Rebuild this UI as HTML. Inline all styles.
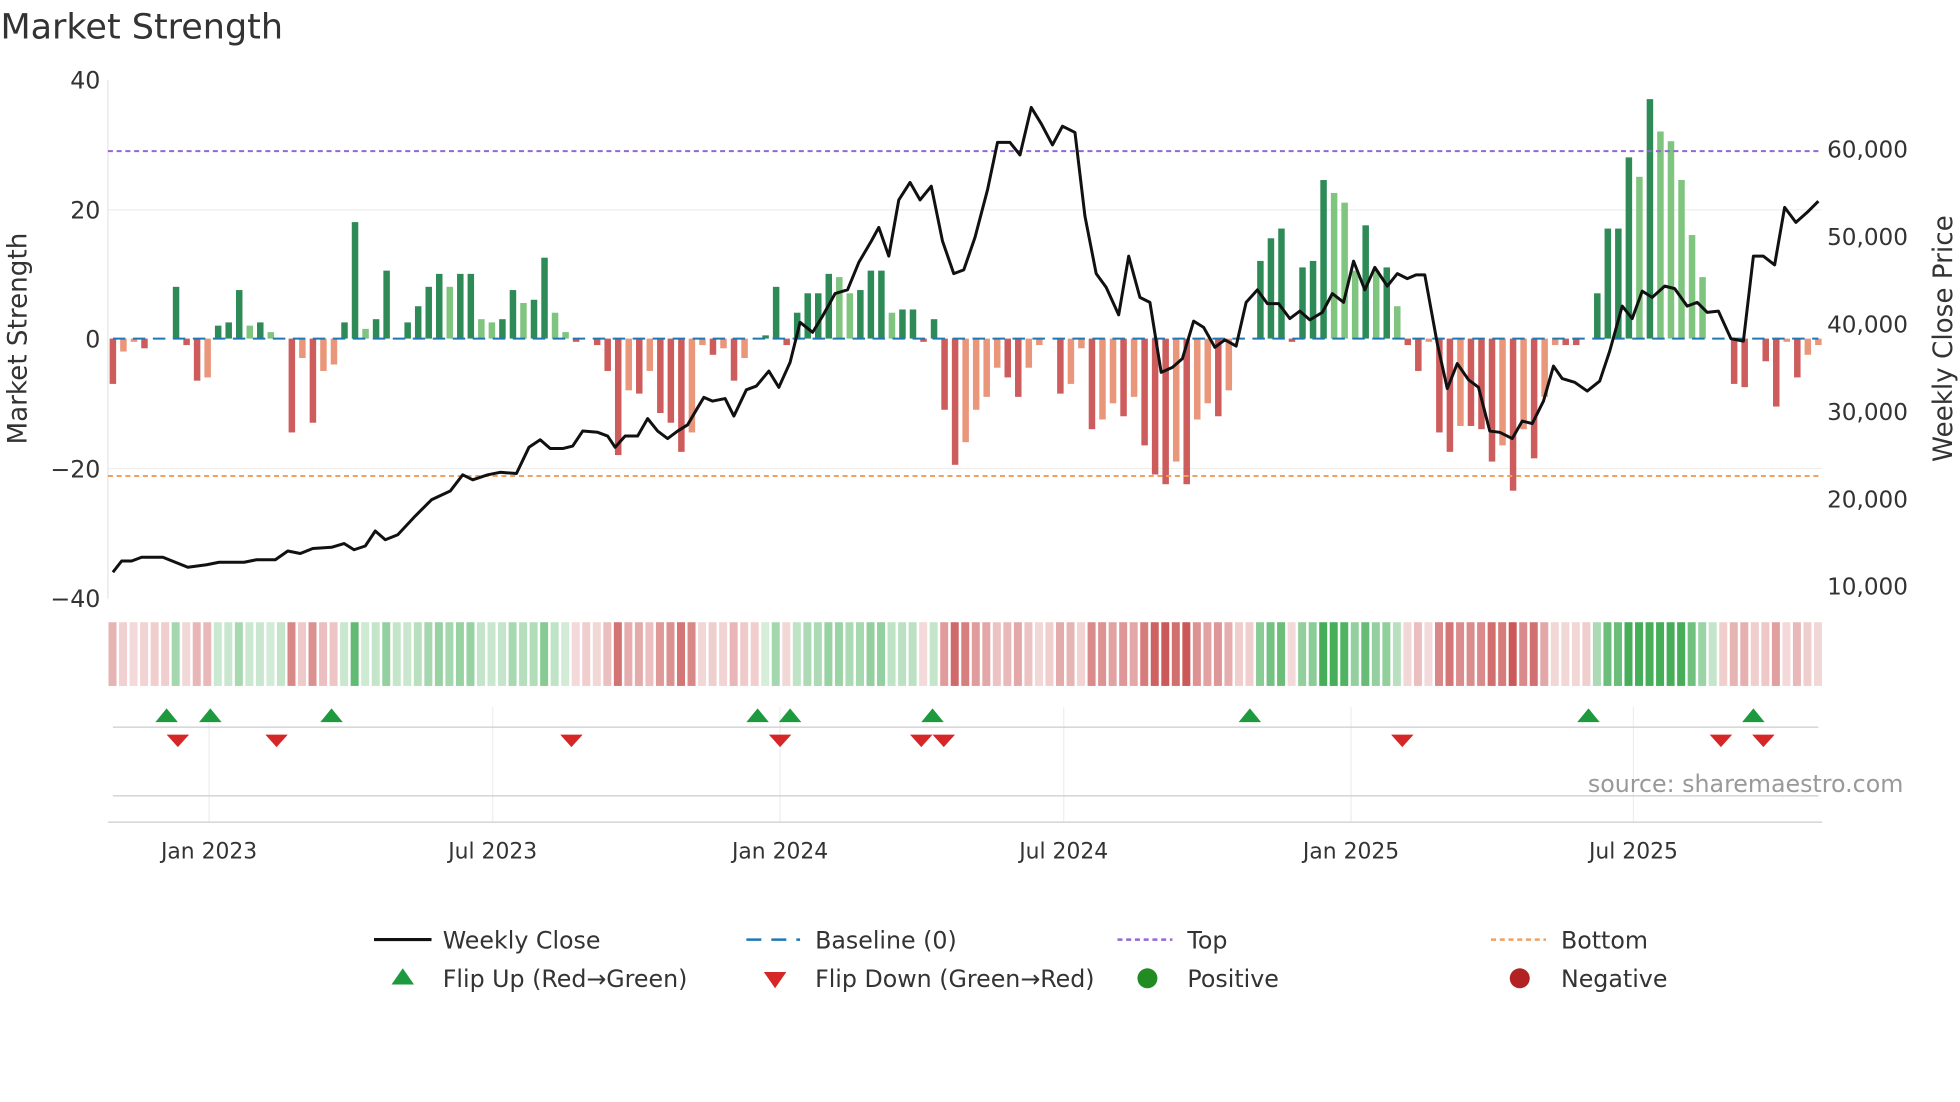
<!DOCTYPE html>
<html><head><meta charset="utf-8"><style>
html,body{margin:0;padding:0;background:#fff;}
svg{display:block;font-family:"DejaVu Sans","Liberation Sans",sans-serif;}
</style></head><body>
<svg id="s" width="1960" height="1102" viewBox="0 0 1568 882" xmlns="http://www.w3.org/2000/svg">
<rect width="1568" height="882" fill="#fff"/>
<text x="0" y="31" font-size="28" fill="#333">Market Strength</text>
<g id="grid"></g>
<g id="bars"></g>
<g id="heat"></g>
<g id="marks"></g>
<g id="txt" fill="#333" font-size="17.5"></g>
<text x="1523" y="634" font-size="19" fill="#999" text-anchor="end">source: sharemaestro.com</text>
<text transform="translate(21,271) rotate(-90)" font-size="21" fill="#333" text-anchor="middle">Market Strength</text>
<text transform="translate(1562,271) rotate(-90)" font-size="21" fill="#333" text-anchor="middle">Weekly Close Price</text>
<g font-size="19" fill="#333">
<line x1="299" y1="752" x2="345" y2="752" stroke="#111" stroke-width="2.5"/><text x="354" y="759">Weekly Close</text>
<line x1="597" y1="752" x2="640" y2="752" stroke="#1f77b4" stroke-width="2" stroke-dasharray="12,8"/><text x="652" y="759">Baseline (0)</text>
<line x1="894" y1="752" x2="938" y2="752" stroke="#9467d4" stroke-width="2" stroke-dasharray="4,3"/><text x="950" y="759">Top</text>
<line x1="1193" y1="752" x2="1237" y2="752" stroke="#f0a060" stroke-width="2" stroke-dasharray="4,3"/><text x="1249" y="759">Bottom</text>
<polygon points="313,788 331,788 322,775" fill="#1e9a3e"/><text x="354" y="790">Flip Up (Red→Green)</text>
<polygon points="611,778 629,778 620,791" fill="#d62728"/><text x="652" y="790">Flip Down (Green→Red)</text>
<circle cx="918" cy="783" r="8" fill="#228b22"/><text x="950" y="790">Positive</text>
<circle cx="1216" cy="783" r="8" fill="#b22222"/><text x="1249" y="790">Negative</text>
</g>
</svg>
<script>
var NS="http://www.w3.org/2000/svg";
function el(p,t,a,txt){var e=document.createElementNS(NS,t);for(var k in a)e.setAttribute(k,a[k]);if(txt!=null)e.textContent=txt;document.getElementById(p).appendChild(e);return e;}
var v=[-7,-2,-0.5,-1.5,0,0,8,-1,-6.5,-6,2,2.5,7.5,2,2.5,1,0,-14.5,-3,-13,-5,-4,2.5,18,1.5,3,10.5,0,2.5,5,8,10,8,10,10,3,2.5,3,7.5,5.5,6,12.5,4,1,-0.5,0,-1,-5,-18,-8,-8.5,-5,-11.5,-13,-17.5,-14.5,-1,-2.5,-1.5,-6.5,-3,0,0.5,8,-1,4,7,7,10,9.5,7,7.5,10.5,10.5,4,4.5,4.5,-0.5,3,-11,-19.5,-16,-11,-9,-4.5,-6,-9,-4.5,-1,0,-8.5,-7,-1.5,-14,-12.5,-10,-12,-9,-16.5,-21,-22.5,-19,-22.5,-12.5,-10,-12,-8,0,0,12,15.5,17,-0.5,11,12,24.5,22.5,21,10.5,17.5,10.5,11,5,-1,-5,-0.5,-14.5,-17.5,-13.5,-13.5,-14,-19,-16.5,-23.5,-14,-18.5,-9,-1,-1,-1,0,7,17,17,28,25,37,32,30.5,24.5,16,9.5,0,0,-7,-7.5,0,-3.5,-10.5,-0.5,-6,-2.5,-1];
var n=v.length,x0=90,dx=(1455-90)/(n-1);
function Y(s){return 271-s*5.18;}
[168,375].forEach(function(y){el("grid","line",{x1:86,x2:1458,y1:y,y2:y,stroke:"#eee","stroke-width":1});});
[167,394,624,851,1081,1307].forEach(function(x){el("grid","line",{x1:x,x2:x,y1:566,y2:658,stroke:"#eee","stroke-width":1});});
el("grid","line",{x1:86,x2:86,y1:64,y2:479,stroke:"#e6e6e6"});
el("grid","line",{x1:90,x2:1455,y1:582,y2:582,stroke:"#ccc"});
el("grid","line",{x1:90,x2:1455,y1:637,y2:637,stroke:"#ccc"});
el("grid","line",{x1:86,x2:1458,y1:658,y2:658,stroke:"#ccc"});
for(var i=0;i<n;i++){var s=v[i],x=x0+i*dx,p=i?v[i-1]:0;if(s==0)continue;
var dark=Math.abs(s)>=Math.abs(p)||Math.sign(s)!=Math.sign(p);
var c=s>0?(dark?"#2e8b57":"#7fc47f"):(dark?"#cd5c5c":"#e9967a");
var y=Y(s);el("bars","rect",{x:x-2.6,y:Math.min(y,271),width:5.2,height:Math.abs(y-271),fill:c});}
el("bars","line",{x1:90,x2:1455,y1:271,y2:271,stroke:"#1f77b4","stroke-width":1.6,"stroke-dasharray":"10,6"});
el("bars","line",{x1:86,x2:1458,y1:121,y2:121,stroke:"#9467d4","stroke-width":1.6,"stroke-dasharray":"4,3"});
el("bars","line",{x1:86,x2:1458,y1:381,y2:381,stroke:"#f0a060","stroke-width":1.6,"stroke-dasharray":"4,3"});
var pts=[[90,458],[97,449],[105,449],[113,446],[130,446],[140,450],[150,454],[165,452],[175,450],[195,450],[205,448],[220,448],[230,441],[240,443],[250,439],[265,438],[275,435],[283,440],[292,437],[300,425],[308,432],[318,428],[332,413],[345,400],[360,393],[370,380],[378,384],[390,380],[400,378],[413,379],[423,358],[432,352],[440,359],[450,359],[458,357],[466,345],[478,346],[486,349],[492,358],[500,349],[510,349],[518,335],[526,345],[534,351],[542,345],[550,340],[557,328],[563,318],[570,321],[580,319],[587,333],[597,312],[605,309],[615,297],[623,310],[632,290],[640,258],[650,266],[658,253],[668,235],[678,232],[687,210],[697,193],[703,182],[711,205],[719,160],[728,146],[736,160],[745,149],[754,193],[763,219],[771,216],[780,190],[790,152],[798,114],[808,114],[816,124],[825,86],[833,99],[842,116],[850,101],[860,106],[868,173],[877,219],[885,230],[895,252],[903,205],[912,238],[920,242],[929,298],[938,294],[946,287],[955,257],[963,262],[972,278],[980,272],[989,277],[997,242],[1006,232],[1014,243],[1023,243],[1032,255],[1040,249],[1048,256],[1058,250],[1066,235],[1075,242],[1083,209],[1092,232],[1100,214],[1110,229],[1118,219],[1126,223],[1133,220],[1140,220],[1150,275],[1158,311],[1166,291],[1175,304],[1183,310],[1192,345],[1200,346],[1210,351],[1218,337],[1226,339],[1235,321],[1243,293],[1250,303],[1260,306],[1270,313],[1280,305],[1288,281],[1298,245],[1306,255],[1314,233],[1322,238],[1332,229],[1340,231],[1350,245],[1358,242],[1366,250],[1375,249],[1385,271],[1395,273],[1403,205],[1411,205],[1420,212],[1428,166],[1437,178],[1446,170],[1455,161]];
el("bars","polyline",{points:pts.map(function(p){return p.join(",")}).join(" "),fill:"none",stroke:"#111","stroke-width":2.4,"stroke-linejoin":"round"});
for(var i=0;i<n;i++){var s=v[i],x=x0+i*dx-3.5,a=Math.min(0.95,0.2+Math.abs(s)/30);
var c=s>0?"rgba(60,170,80,"+a+")":"rgba(200,80,80,"+a+")";if(s==0)c=i>0&&v[i-1]>0?"rgba(60,170,80,0.3)":"rgba(200,80,80,0.28)";
el("heat","rect",{x:x,y:498,width:6.4,height:51,fill:c});}
[133,168,265,606,632,746,1000,1271,1403].forEach(function(x){el("marks","polygon",{points:(x-9)+",578 "+(x+9)+",578 "+x+",567",fill:"#1e9a3e"});});
[142,221,457,624,737,755,1122,1377,1411].forEach(function(x){el("marks","polygon",{points:(x-9)+",588 "+(x+9)+",588 "+x+",598",fill:"#d62728"});});
[[40,64],[20,168],[0,271],[-20,375],[-40,479]].forEach(function(t){el("txt","text",{x:80,y:t[1]+7,"text-anchor":"end","font-size":19},t[0]<0?"\u2212"+(-t[0]):t[0]);});
[["60,000",119],["50,000",189],["40,000",259],["30,000",329],["20,000",399],["10,000",469]].forEach(function(t){el("txt","text",{x:1462,y:t[1]+7,"font-size":18.5},t[0]);});
[["Jan 2023",167],["Jul 2023",394],["Jan 2024",624],["Jul 2024",851],["Jan 2025",1081],["Jul 2025",1307]].forEach(function(t){el("txt","text",{x:t[1],y:687,"text-anchor":"middle"},t[0]);});
</script>
</body></html>
